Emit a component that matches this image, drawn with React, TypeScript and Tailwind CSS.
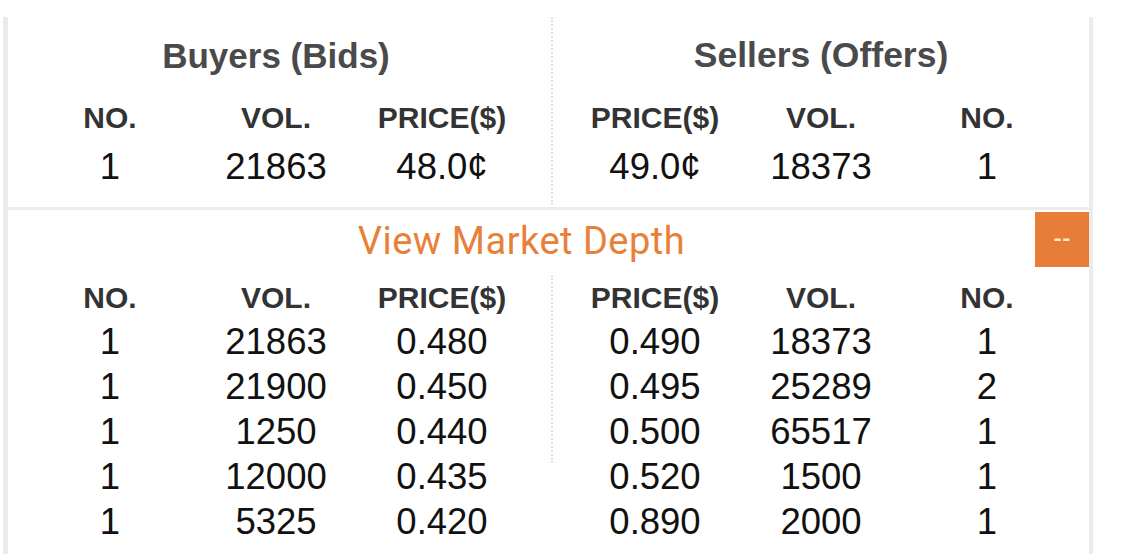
const bids = [
  { no: 1, vol: 21863, price: '0.480' },
  { no: 1, vol: 21900, price: '0.450' },
  { no: 1, vol: 1250, price: '0.440' },
  { no: 1, vol: 12000, price: '0.435' },
  { no: 1, vol: 5325, price: '0.420' },
]

const offers = [
  { no: 1, vol: 18373, price: '0.490' },
  { no: 2, vol: 25289, price: '0.495' },
  { no: 1, vol: 65517, price: '0.500' },
  { no: 1, vol: 1500, price: '0.520' },
  { no: 1, vol: 2000, price: '0.890' },
]

const sans = "font-['Liberation_Sans',Arial,sans-serif]"

function HeadRow({ cols, className }: { cols: string[]; className: string }) {
  return (
    <div className={`flex items-center text-[30px] font-bold text-[#333333] ${className}`}>
      {cols.map((c, i) => (
        <div key={i} className="w-[166px] text-center leading-none">
          {c}
        </div>
      ))}
    </div>
  )
}

function DataRow({ cells, className }: { cells: (string | number)[]; className: string }) {
  return (
    <div className={`flex items-center text-[36.5px] text-[#111111] ${className}`}>
      {cells.map((c, i) => (
        <div key={i} className="w-[166px] text-center leading-none">
          {c}
        </div>
      ))}
    </div>
  )
}

export default function App() {
  return (
    <div className={`min-h-screen bg-white pt-[17px] pl-[3px] ${sans}`}>
      <div className="w-[1090px] border-l-[5px] border-r-[4px] border-[#ebebeb] bg-white pb-[12px]">
        {/* best bid / best offer */}
        <div className="flex h-[190px]">
          <div className="w-[543px] pl-[19px]">
            <div className="flex h-[78px] w-[498px] items-center justify-center text-[35px] font-bold text-[#4a4a4a]">
              Buyers (Bids)
            </div>
            <HeadRow cols={['NO.', 'VOL.', 'PRICE($)']} className="h-[46px]" />
            <DataRow cells={[1, 21863, '48.0¢']} className="h-[52px]" />
          </div>
          <div className="h-[188px] w-0 border-l-2 border-dotted border-[#dddddd]" />
          <div className="flex-1 pl-[19px]">
            <div className="flex h-[78px] w-[498px] items-center justify-center text-[35.5px] font-bold text-[#4a4a4a]">
              Sellers (Offers)
            </div>
            <HeadRow cols={['PRICE($)', 'VOL.', 'NO.']} className="h-[46px]" />
            <DataRow cells={['49.0¢', 18373, 1]} className="h-[52px]" />
          </div>
        </div>

        <div className="h-[3px] bg-[#ececec]" />

        <div className="flex h-[57px]">
          <div className="flex flex-1 items-center justify-center pt-[6px] font-['Roboto',sans-serif] text-[38px] tracking-[0.5px] text-[#e8803a]">
            View Market Depth
          </div>
          <button className="mt-[2px] flex h-[55px] w-[54px] items-center justify-center bg-[#e87d37] font-['Roboto',sans-serif] text-[22px] font-bold text-[#fde9cf]">
            --
          </button>
        </div>

        {/* market depth */}
        <div className="flex">
          <div className="w-[543px] pl-[19px] pt-[9px]">
            <HeadRow cols={['NO.', 'VOL.', 'PRICE($)']} className="h-[44px]" />
            {bids.map((b, i) => (
              <DataRow key={i} cells={[b.no, b.vol, b.price]} className="h-[45px]" />
            ))}
          </div>
          <div className="mt-[8px] h-[188px] w-0 border-l-2 border-dotted border-[#dddddd]" />
          <div className="flex-1 pl-[19px] pt-[9px]">
            <HeadRow cols={['PRICE($)', 'VOL.', 'NO.']} className="h-[44px]" />
            {offers.map((o, i) => (
              <DataRow key={i} cells={[o.price, o.vol, o.no]} className="h-[45px]" />
            ))}
          </div>
        </div>
      </div>
    </div>
  )
}
